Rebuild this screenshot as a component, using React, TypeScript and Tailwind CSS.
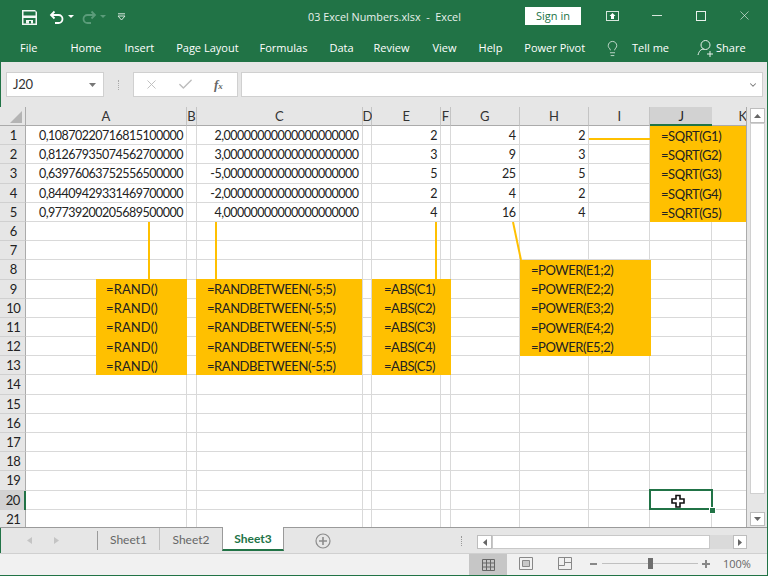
import { ChevronDown, X, Check, Lightbulb } from "lucide-react";

const columns = ["A", "B", "C", "D", "E", "F", "G", "H", "I", "J", "K"];

const values: Record<string, string[]> = {
  A: ["0,10870220716815100000", "0,81267935074562700000", "0,63976063752556500000", "0,84409429331469700000", "0,97739200205689500000"],
  C: ["2,00000000000000000000", "3,00000000000000000000", "-5,00000000000000000000", "-2,00000000000000000000", "4,00000000000000000000"],
  E: ["2", "3", "5", "2", "4"],
  G: ["4", "9", "25", "4", "16"],
  H: ["2", "3", "5", "2", "4"],
};

const tabs = [
  { label: "Home", cls: "ml-[33px]" },
  { label: "Insert", cls: "ml-[23px]" },
  { label: "Page Layout", cls: "ml-[22px]" },
  { label: "Formulas", cls: "ml-[21px]" },
  { label: "Data", cls: "ml-[22px]" },
  { label: "Review", cls: "ml-[20px]" },
  { label: "View", cls: "ml-[23px]" },
  { label: "Help", cls: "ml-[22px]" },
  { label: "Power Pivot", cls: "ml-[22px]" },
];

const rows = Array.from({ length: 21 }, (_, i) => i + 1);

function FormulaBox({ className, lines }: { className: string; lines: string[] }) {
  return (
    <div className={`absolute flex flex-col bg-[#ffc000] ${className}`}>
      {lines.map((l, i) => (
        <div key={i} className="h-[19.2px] leading-[20px] text-[#222] whitespace-nowrap">
          {l}
        </div>
      ))}
    </div>
  );
}

function Sheet() {
  return (
    <div className="relative w-[746px] h-[420px] overflow-hidden bg-white font-['Lato',sans-serif] text-[13px] tracking-[-0.45px] text-[#222]">
      <div className="grid grid-cols-[25.5px_161.5px_9.5px_166px_9.5px_69px_9.5px_69px_69.5px_61px_62px_62px] grid-rows-[19px_repeat(21,19.2px)]">
        <div className="bg-[#e6e6e6] border-b border-[#ababab] border-r relative">
          <div className="absolute right-[3px] bottom-[2px] w-0 h-0 border-l-[12px] border-l-transparent border-b-[12px] border-b-[#b4b4b4]" />
        </div>
        {columns.map((c) => (
          <div
            key={c}
            className={
              c === "J"
                ? "bg-[#d2d2d2] border-b-2 border-[#217346] text-center text-[#222] leading-[18px]"
                : "bg-[#e6e6e6] border-b border-[#ababab] border-r border-r-[#c4c4c4] text-center leading-[18px] text-[#333]"
            }
          >
            {c}
          </div>
        ))}
        {rows.map((r) => (
          <div key={r} className="contents">
            <div
              className={
                r === 20
                  ? "bg-[#d2d2d2] border-r-2 border-[#217346] text-center leading-[19px] pl-[2px]"
                  : "bg-[#e6e6e6] border-r border-b border-[#ababab] border-b-[#d0d0d0] text-center leading-[19px] pl-[2px]"
              }
            >
              {r}
            </div>
            {columns.map((c) => (
              <div
                key={c}
                className="border-r border-b border-[#d9d9d9] text-right pr-[3px] leading-[19px] whitespace-nowrap overflow-hidden text-[12.5px] tracking-[-0.5px]"
              >
                {values[c]?.[r - 1] ?? ""}
              </div>
            ))}
          </div>
        ))}
      </div>

      {/* shapes pasted over the sheet */}
      <FormulaBox className="left-[96px] top-[172px] w-[91px] h-[96px] pl-[10px] tracking-[0.1px]" lines={["=RAND()", "=RAND()", "=RAND()", "=RAND()", "=RAND()"]} />
      <FormulaBox className="left-[196px] top-[172px] w-[166px] h-[96px] pl-[11px]" lines={["=RANDBETWEEN(-5;5)", "=RANDBETWEEN(-5;5)", "=RANDBETWEEN(-5;5)", "=RANDBETWEEN(-5;5)", "=RANDBETWEEN(-5;5)"]} />
      <FormulaBox className="left-[372px] top-[172px] w-[79px] h-[96px] pl-[12px]" lines={["=ABS(C1)", "=ABS(C2)", "=ABS(C3)", "=ABS(C4)", "=ABS(C5)"]} />
      <FormulaBox className="left-[520px] top-[153px] w-[131px] h-[96px] pl-[11px]" lines={["=POWER(E1;2)", "=POWER(E2;2)", "=POWER(E3;2)", "=POWER(E4;2)", "=POWER(E5;2)"]} />
      <FormulaBox className="left-[650px] top-[19px] w-[96px] h-[96px] pl-[11px]" lines={["=SQRT(G1)", "=SQRT(G2)", "=SQRT(G3)", "=SQRT(G4)", "=SQRT(G5)"]} />

      <div className="absolute left-[148px] top-[115px] w-[2px] h-[57px] bg-[#ffc000]" />
      <div className="absolute left-[215px] top-[115px] w-[2px] h-[57px] bg-[#ffc000]" />
      <div className="absolute left-[435px] top-[115px] w-[2px] h-[57px] bg-[#ffc000]" />
      <div className="absolute left-[589px] top-[31px] w-[61px] h-[2px] bg-[#ffc000]" />
      <svg className="absolute left-[510px] top-[115px]" width="14" height="40">
        <line x1="3" y1="0" x2="11" y2="38" stroke="#ffc000" strokeWidth="2" />
      </svg>

      {/* selected cell J20 */}
      <div className="absolute left-[649px] top-[382px] w-[64px] h-[21px] border-2 border-[#217346]" />
      <div className="absolute left-[709px] top-[400px] w-[5px] h-[5px] bg-[#217346] border-[0.5px] border-white box-content" />
      <svg className="absolute left-[671px] top-[387px]" width="15" height="15" viewBox="0 0 15 15">
        <path d="M5 1.5h4v3.5h4v4h-4v4h-4v-4h-4v-4h4z" fill="#fff" stroke="#111" strokeWidth="1.6" />
      </svg>
    </div>
  );
}

export default function App() {
  return (
    <div className="w-[768px] h-[576px] flex flex-col bg-[#e6e6e6] overflow-hidden font-['Open_Sans',sans-serif]">
      {/* title bar */}
      <div className="h-[31px] bg-[#217346] flex items-center text-white relative shrink-0 pt-[3px]">
        <svg className="ml-[22px]" width="15" height="15" viewBox="0 0 15 15">
          <path d="M0 0h13l2 2v13H0z" fill="#f4f8f5" />
          <path d="M1.500 1.500h12v4h-12z" fill="#217346" />
          <path d="M1.500 8h12v5.500h-12z" fill="#217346" />
          <path d="M4 10h7v3.500H4z" fill="#f4f8f5" />
          <path d="M7 11h2v2.500H7z" fill="#217346" />
        </svg>
        <svg className="ml-[12px]" width="16" height="14" viewBox="0 0 16 14" fill="none">
          <path d="M5.5 1.5L2 5l3.5 3.5M2.5 5h7a4 4 0 010 8H6" stroke="#fff" strokeWidth="1.8" />
        </svg>
        <svg className="ml-[3px]" width="6" height="4"><path d="M0 0h6L3 3z" fill="#fff" /></svg>
        <svg className="ml-[7px]" width="16" height="14" viewBox="0 0 16 14" fill="none">
          <path d="M10.5 1.5L14 5l-3.5 3.5M13.5 5h-7a4 4 0 000 8H10" stroke="#5b9c7a" strokeWidth="1.8" />
        </svg>
        <svg className="ml-[3px]" width="6" height="4"><path d="M0 0h6L3 3z" fill="#5b9c7a" /></svg>
        <svg className="ml-[11px]" width="9" height="8" viewBox="0 0 9 8" fill="none">
          <path d="M1 .8h7" stroke="#d6e6dc" />
          <path d="M1 3h7L4.5 7z" stroke="#d6e6dc" />
        </svg>
        <span className="absolute left-[308px] top-[9px] text-[10.8px] leading-[16px] text-[#e8f1ec] whitespace-pre">03 Excel Numbers.xlsx  -  Excel</span>
        <div className="absolute left-[525px] top-[7px] w-[56px] h-[18px] bg-white text-[#217346] text-[11px] leading-[18px] text-center">Sign in</div>
        <svg className="absolute left-[606px] top-[11px]" width="13" height="11" viewBox="0 0 13 11" fill="none">
          <rect x=".5" y=".5" width="12" height="9" stroke="#d6e6dc" />
          <path d="M6.5 2l3 3H8v3H5V5H3.5z" fill="#fff" />
        </svg>
        <div className="absolute left-[652px] top-[15px] w-[10px] h-[1px] bg-[#d6e6dc]" />
        <div className="absolute left-[696px] top-[11px] w-[10px] h-[10px] border border-[#e8f1ec]" />
        <X className="absolute left-[737px] top-[8px] w-[15px] h-[15px] text-[#e8f1ec]" strokeWidth={1} />
      </div>

      {/* ribbon tabs */}
      <div className="h-[31px] bg-[#217346] flex items-center text-white text-[11px] shrink-0 relative pt-[3px]">
        <span className="ml-[20px]">File</span>
        {tabs.map((t) => (
          <span key={t.label} className={`${t.cls} whitespace-nowrap`}>{t.label}</span>
        ))}
        <Lightbulb className="absolute left-[604px] top-[8px] w-[17px] h-[19px] text-[#e8f1ec]" strokeWidth={1.1} />
        <span className="absolute left-[632px] top-[9px] leading-[16px]">Tell me</span>
        <svg className="absolute left-[697px] top-[8px]" width="17" height="18" viewBox="0 0 17 18" fill="none">
          <circle cx="8.5" cy="6" r="4.5" stroke="#e8f1ec" />
          <path d="M1 16c1-4 3-6 6-6M10 15h6M13 12v6" stroke="#e8f1ec" />
        </svg>
        <span className="absolute left-[716px] top-[9px] leading-[16px]">Share</span>
      </div>

      <div className="flex-1 flex flex-col border-x border-b border-[#217346] min-h-0">
        {/* name box + formula bar */}
        <div className="h-[45px] pt-[10px] flex items-start shrink-0">
          <div className="ml-[5px] w-[98px] h-[25px] bg-white border border-[#d0d0d0] flex items-center justify-between pl-[6px] pr-[7px] text-[#333] font-['Lato',sans-serif]">
            <span className="text-[13px] tracking-[-0.3px]">J20</span>
            <svg width="7" height="4"><path d="M0 0h7L3.500 4z" fill="#777" /></svg>
          </div>
          <div className="ml-[14px] mt-[8px] w-[1px] h-[10px] border-l border-dotted border-[#aaa]" />
          <div className="ml-[14px] w-[105px] h-[25px] bg-white border border-[#d0d0d0] flex items-center text-[#bdbdbd]">
            <X className="ml-[10px] w-[15px] h-[15px]" strokeWidth={1.5} />
            <Check className="ml-[18px] w-[17px] h-[17px]" strokeWidth={2} />
            <span className="ml-[20px] font-['Liberation_Serif',serif] italic text-[13px] text-[#666] font-bold leading-none">f<span className="text-[9px]">x</span></span>
          </div>
          <div className="ml-[3px] w-[522px] h-[25px] bg-white border border-[#d0d0d0] flex items-center justify-end pr-[4px]">
            <ChevronDown className="w-[10px] h-[10px] text-[#777]" strokeWidth={2.5} />
          </div>
        </div>

        {/* sheet + vertical scrollbar */}
        <div className="h-[420px] flex shrink-0 -ml-px">
          <Sheet />
          <div className="flex-1 border-l border-[#ababab] flex flex-col pl-[3px] pr-[2px] pt-[1px] pb-[1px]">
            <div className="h-[15px] bg-white border border-[#bdbdbd] flex items-center justify-center">
              <svg width="7" height="4"><path d="M3.500 0L7 4H0z" fill="#666" /></svg>
            </div>
            <div className="h-[371px] bg-white border border-[#d0d0d0]" />
            <div className="flex-1" />
            <div className="h-[14px] bg-white border border-[#bdbdbd] flex items-center justify-center">
              <svg width="7" height="4"><path d="M0 0h7L3.500 4z" fill="#666" /></svg>
            </div>
          </div>
        </div>

        {/* sheet tabs */}
        <div className="h-[27px] flex items-stretch border-t border-[#9a9a9a] border-b border-b-[#d0d0d0] relative shrink-0 -ml-px text-[12px] text-[#666] font-['Lato',sans-serif]">
          <svg className="absolute left-[27px] top-[9px]" width="5" height="7"><path d="M5 0v7L0 3.500z" fill="#c4c4c4" /></svg>
          <svg className="absolute left-[54px] top-[9px]" width="5" height="7"><path d="M0 0v7l5-3.500z" fill="#c4c4c4" /></svg>
          <div className="ml-[97px] my-[3px] w-[1px] bg-[#9a9a9a]" />
          <div className="w-[62px] text-center leading-[24px] border-r border-[#c0c0c0] mb-[3px] mt-[0px]">Sheet1</div>
          <div className="w-[62px] text-center leading-[24px]">Sheet2</div>
          <div className="w-[62px] -mt-px bg-white border-x border-[#9a9a9a] border-b-2 border-b-[#217346] h-[24px] text-center leading-[24px] font-bold text-[#217346]">Sheet3</div>
          <svg className="absolute left-[315px] top-[5px]" width="16" height="16" viewBox="0 0 16 16" fill="none">
            <circle cx="8" cy="8" r="7" stroke="#8c8c8c" strokeWidth="1.2" />
            <path d="M8 4v8M4 8h8" stroke="#8c8c8c" strokeWidth="1.6" />
          </svg>
          <div className="absolute left-[461px] top-[8px] h-[10px] w-[1px] border-l border-dotted border-[#999]" />
          <div className="absolute left-[477px] top-[7px] w-[270px] h-[14px] flex">
            <div className="w-[15px] bg-white border border-[#bdbdbd] flex items-center justify-center">
              <svg width="4" height="7"><path d="M4 0v7L0 3.500z" fill="#666" /></svg>
            </div>
            <div className="w-[218px] bg-white border border-[#c8c8c8]" />
            <div className="flex-1 bg-[#dadada]" />
            <div className="w-[14px] bg-white border border-[#bdbdbd] flex items-center justify-center">
              <svg width="4" height="7"><path d="M0 0v7l4-3.500z" fill="#666" /></svg>
            </div>
          </div>
        </div>

        {/* status bar */}
        <div className="flex-1 bg-[#f1f1f1] relative -ml-px text-[#666]">
          <div className="absolute left-[469px] top-0 bottom-0 w-[38px] bg-[#c6c6c6] flex items-center justify-center">
            <svg width="13" height="12" viewBox="0 0 13 12" fill="none">
              <path d="M.5.500h12v11H.5zM.5 4h12M.5 8h12M4.500.500v11M8.500.500v11" stroke="#666" />
            </svg>
          </div>
          <svg className="absolute left-[519px] top-[3px]" width="14" height="13" viewBox="0 0 14 13" fill="none">
            <path d="M.5.500h13v12H.5z" stroke="#888" />
            <path d="M3.500 3.500h7v6h-7z" stroke="#888" fill="#c8c8c8" />
          </svg>
          <svg className="absolute left-[558px] top-[3px]" width="14" height="13" viewBox="0 0 14 13" fill="none">
            <path d="M.5.500h13v12H.5zM.5 8.500h6v-8M6.500 5.500h7" stroke="#888" />
          </svg>
          <div className="absolute left-[590px] top-[9px] w-[7px] h-[1.500px] bg-[#888]" />
          <div className="absolute left-[602px] top-[9px] w-[96px] h-[1px] bg-[#c0c0c0]" />
          <div className="absolute left-[648px] top-[4px] w-[5px] h-[11px] bg-[#6e6e6e]" />
          <div className="absolute left-[702px] top-[9px] w-[8px] h-[1.500px] bg-[#888]" />
          <div className="absolute left-[705px] top-[6px] w-[1.500px] h-[8px] bg-[#888]" />
          <span className="absolute left-[723px] top-[2px] text-[11px] leading-[16px] text-[#666]">100%</span>
        </div>
      </div>
    </div>
  );
}
